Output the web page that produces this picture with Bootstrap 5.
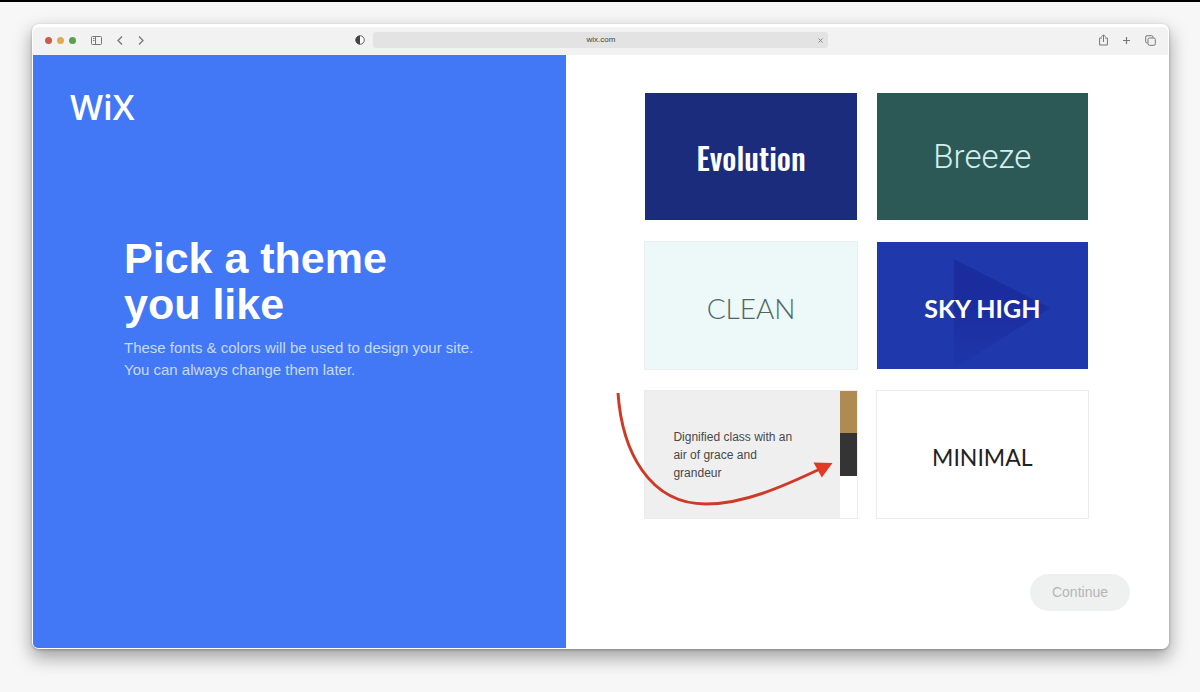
<!DOCTYPE html>
<html lang="en">
<head>
<meta charset="utf-8">
<meta name="viewport" content="width=device-width, initial-scale=1">
<title>Pick a theme</title>
<link href="https://cdn.jsdelivr.net/npm/bootstrap@5.3.0/dist/css/bootstrap.min.css" rel="stylesheet">
<style>
  body { background: #f7f7f7; border-top: 2px solid #000; padding: 22px 31px 43px 32px; font-family: "Liberation Sans", Arial, sans-serif; }
  .browser { border: 1px solid #fff; border-top-width: 3px; border-radius: 7px; background: #fff; box-shadow: 0 8px 18px 1px rgba(0,0,0,.34), 0 1px 3px rgba(0,0,0,.25); }
  .browser-bar { display: grid; grid-template-columns: 1fr 41% 1fr; height: 28px; padding: 0 12px 2px; background: #f2f2f3; border-radius: 5px 5px 0 0; color: #777; }
  .browser-bar button { line-height: 0; color: inherit; }
  .dots { gap: 5px; margin-right: 15px; }
  .dot { width: 7px; height: 7px; border-radius: 50%; }
  .dot-close { background: #cf5a4c; } .dot-min { background: #dfab52; } .dot-max { background: #55a548; }
  .tools { gap: 15px; }
  .address { background: #e3e3e3; border-radius: 3px; height: 16px; }
  .address input { font-size: 8px; color: #444; outline: 0; }
  .pane-intro { flex: 0 0 47%; background: #4278f5; border-radius: 0 0 0 5px; padding: 32px 37px; color: #fff; }
  .brand { font: 600 35px/40px "Open Sans", sans-serif; color: #fff; }
  .intro { padding: 108px 0 0 54px; }
  .intro h1 { font-size: 43px; line-height: 46px; font-weight: 700; margin-bottom: 10px; }
  .intro p { font-size: 15px; line-height: 22px; color: #c6dafd; }
  .pane-themes { padding: 38px 38px 37px; }
  .themes { display: grid; grid-template-columns: 1fr 1fr; gap: 22px 20px; padding: 0 42px 0 41px; }
  .theme { height: 127px; border: 0; padding: 4px 0 0; }
  .theme-evolution { background: #1b2c7d; color: #fff; font: 500 31px Oswald, "Roboto Condensed", Roboto, sans-serif; padding-top: 0; }
  .theme-breeze { background: #2c5955; color: #d3eeed; font: 300 33px Roboto, sans-serif; padding-top: 0; }
  .theme-clean { background: #edf8f8; color: #4d6665; font: 300 28px Lato, sans-serif; }
  .theme-sky { background: #1f39ac; color: #fff; font: 700 25px Lato, sans-serif; }
  .theme-minimal { background: #fff; color: #222; font: 400 23px Lato, sans-serif; }
  .outlined { box-shadow: 0 0 0 1px #eaeced; }
  .theme-classic { background: #efefef; color: #45484b; font-size: 12px; line-height: 18px; padding: 0; }
  .theme-classic .blurb { padding: 0 34px 0 28px; }
  .swatches { flex: 0 0 17px; }
  .swatch { flex: 1; }
  .swatch-gold { background: #ae8b50; } .swatch-dark { background: #343434; } .swatch-white { background: #fff; }
  .pointer { left: -31px; top: 0; width: 230px; height: 127px; pointer-events: none; }
  .continue, .continue:disabled { background: #eff1f1; color: #b3b5b6; font-size: 14px; line-height: 21px; padding: 8px 22px; border: 0; opacity: 1; }
</style>
</head>
<body class="min-vh-100 d-flex flex-column">
<div class="browser flex-grow-1 d-flex flex-column">
  <header class="browser-bar align-items-center">
    <div class="d-flex align-items-center">
      <div class="dots d-flex">
        <button class="dot dot-close border-0 p-0" aria-label="Close window"></button>
        <button class="dot dot-min border-0 p-0" aria-label="Minimize"></button>
        <button class="dot dot-max border-0 p-0" aria-label="Zoom"></button>
      </div>
      <div class="tools d-flex">
        <button class="btn border-0 p-0" aria-label="Sidebar"><svg width="11" height="9" fill="none" stroke="currentColor"><rect x=".5" y=".5" width="10" height="8" rx="1"/><path d="M4.500 1v7M2 2.500h1.500M2 4.500h1.500"/></svg></button>
        <button class="btn border-0 p-0" aria-label="Back"><svg width="6" height="9" fill="none" stroke="currentColor" stroke-width="1.300"><path d="M5 .5 1 4.500l4 4"/></svg></button>
        <button class="btn border-0 p-0" aria-label="Forward"><svg width="6" height="9" fill="none" stroke="currentColor" stroke-width="1.300"><path d="m1 .5 4 4-4 4"/></svg></button>
      </div>
      <button class="btn border-0 p-0 ms-auto me-2" aria-label="Privacy report"><svg width="10" height="10"><circle cx="5" cy="5" r="4.300" fill="#fff" stroke="#666"/><path d="M5 .7a4.300 4.300 0 0 0 0 8.600z" fill="#444"/></svg></button>
    </div>
    <div class="address d-flex align-items-center px-1">
      <input type="text" class="flex-grow-1 border-0 bg-transparent p-0 ps-2 text-center" value="wix.com" aria-label="Address">
      <button class="btn border-0 p-0" aria-label="Stop loading"><svg width="7" height="7" stroke="#888"><path d="m1.500 1.500 4 4m0-4-4 4"/></svg></button>
    </div>
    <div class="tools d-flex align-items-center justify-content-end">
      <button class="btn border-0 p-0" aria-label="Share"><svg width="9" height="12" fill="none" stroke="currentColor"><path d="M3 4H.6v7h7.800V4H6M4.500 8V1M2.500 2.800 4.500.8l2 2"/></svg></button>
      <button class="btn border-0 p-0" aria-label="New tab"><svg width="7" height="7" stroke="currentColor" stroke-width="1.200"><path d="M3.500 0v7M0 3.500h7"/></svg></button>
      <button class="btn border-0 p-0" aria-label="Tabs"><svg width="11" height="11" fill="none" stroke="currentColor"><rect x="3" y="3" width="7.300" height="7.300" rx="1.500"/><path d="M2.500 8H2A1.300 1.300 0 0 1 .7 6.700V2A1.300 1.300 0 0 1 2 .7h4.700A1.300 1.300 0 0 1 8 2v.5"/></svg></button>
    </div>
  </header>
  <main class="d-flex flex-grow-1">
    <section class="pane-intro">
      <a href="#" class="brand d-block text-decoration-none">WiX</a>
      <div class="intro">
        <h1>Pick a theme<br>you like</h1>
        <p class="mb-0">These fonts &amp; colors will be used to design your site.<br>You can always change them later.</p>
      </div>
    </section>
    <section class="pane-themes flex-grow-1 d-flex flex-column">
      <div class="themes">
        <button class="theme theme-evolution">Evolution</button>
        <button class="theme theme-breeze">Breeze</button>
        <button class="theme theme-clean outlined">CLEAN</button>
        <button class="theme theme-sky position-relative">
          <svg class="position-absolute top-0 start-0 w-100 h-100" viewBox="0 0 212 127" preserveAspectRatio="none" aria-hidden="true"><defs><linearGradient id="fade" x2="0" y2="1"><stop offset=".3" stop-color="#1a2c9e"/><stop offset="1" stop-color="#1a2c9e" stop-opacity=".2"/></linearGradient></defs><path d="M77 17 174 66 77 127z" fill="url(#fade)"/></svg>
          <span class="position-relative">SKY HIGH</span>
        </button>
        <button class="theme theme-classic outlined position-relative d-flex text-start">
          <span class="blurb flex-grow-1 align-self-center">Dignified class with an air of grace and grandeur</span>
          <span class="swatches d-flex flex-column align-self-stretch">
            <span class="swatch swatch-gold"></span><span class="swatch swatch-dark"></span><span class="swatch swatch-white"></span>
          </span>
          <svg class="pointer position-absolute" viewBox="0 0 230 127" aria-hidden="true"><path d="M4 2C8 60 35 113 92 113c38 0 78-18 114-35" fill="none" stroke="#cf3a28" stroke-width="3"/><path d="m218.500 72-19-.6 8.300 15z" fill="#e03a24"/></svg>
        </button>
        <button class="theme theme-minimal outlined">MINIMAL</button>
      </div>
      <button class="btn rounded-pill continue align-self-end mt-auto" disabled>Continue</button>
    </section>
  </main>
</div>
<script src="https://cdn.jsdelivr.net/npm/bootstrap@5.3.0/dist/js/bootstrap.bundle.min.js"></script>
</body>
</html>
